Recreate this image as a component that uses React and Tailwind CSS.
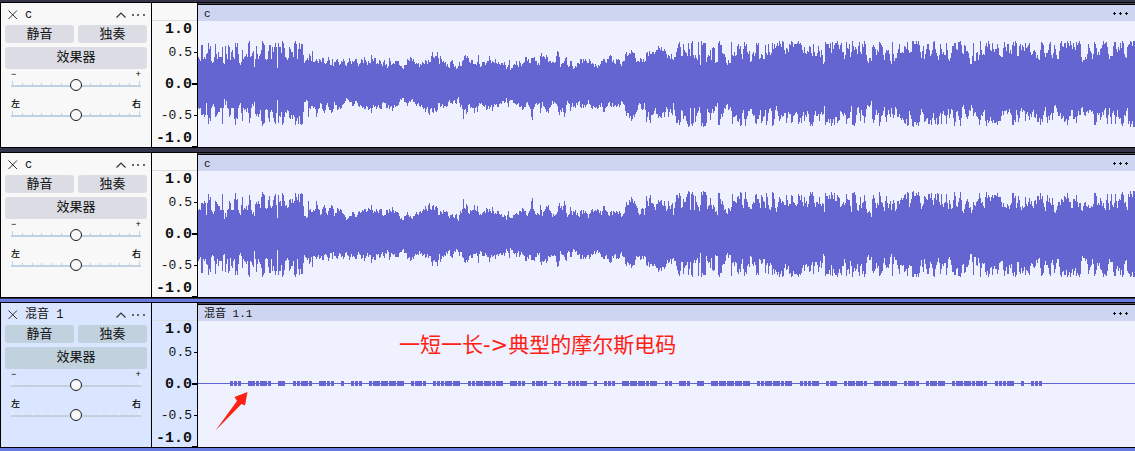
import React from "react";

const BODY_WIDTH = 937;
const CENTER = 63;

// Envelope key points, three sub-steps to a column: [position, level] pairs per section.
const UPPER = [
  { start: -3, points: [9,80,12,87,19,87,20,45,23,45,25,87,30,87,33,72,38,70,41,39,46,48,48,94,54,96,57,80,60,42,64,72,68,87,70,67,74,82,78,80,81,48,83,52,85,100,89,102,91,48,95,72,98,88,101,45,104,52,107,90,112,60,117,88,122,40,127,39,130,72,133,98,138,96,141,60,145,87,150,78,158,80,161,38,165,38,167,82,172,68,177,66,179,110,181,88,185,48,189,87,195,72,199,60,203,33,207,45,211,87,217,88,222,45,226,45,230,87,233,50,236,66,241,38,244,52,247,113,250,38,254,50,259,68,262,33,267,55,271,82,276,90,284,52,288,65,294,80,298,38,304,42,308,87,314,38,318,42,321,78,323,42,327,98,333,90,339,90,343,72,348,92,352,64,356,95,364,88,370,98,374,86,380,97,386,84,391,102,396,92,400,81,406,106,412,87,416,107,425,90,435,102,445,87,453,108,462,85,470,102,482,88,492,103,498,87,505,98,509,82,515,97,526,98,530,75,534,93,540,83,548,98,555,94,562,108,567,90,577,113,584,84,592,102,600,92,608,94,615,108,623,113,632,104,640,90,646,81,654,86,660,102,670,100,678,104,685,100,694,94,702,95,708,78,713,67,719,84,728,67,732,102,736,78,743,97,752,96,760,110,769,93,776,102,785,116,792,96,797,107,804,90,809,78,818,78,825,98,831,90,838,101,846,95,850,75,857,110,865,96,874,98,883,78,890,98,900,87,908,103,918,98,928,97,936,115,943,91,947,119,955,104,960,100] },
  { start: 307, points: [7,112,13,90,17,119,25,105,34,94,39,112,43,93,51,102,58,96,65,81,72,98,78,83,86,83,93,92,102,104,109,69,115,78,126,82,132,93,142,97,150,95,157,63,163,82,166,110,177,94,184,80,189,112,199,92,206,117,218,98,228,87,240,88,246,100,254,86,263,98,275,108,287,102,296,88,303,98,312,78,319,79,328,99,340,88,348,107,355,92,364,67,371,74,379,60,386,70,396,92,406,85,418,96,428,66,440,72,450,66,456,60,461,48,467,60,474,62,480,64,489,75,498,72,506,90,513,66,519,43,523,37,528,77,533,79,535,42,540,65,546,79,550,39,556,79,559,39,564,40,566,75,570,74,576,90,581,37,585,105,588,105,590,33,594,40,600,38,603,96,610,74,615,60,619,90,623,54,629,54,631,98,638,97,641,40,648,44,653,70,658,72,663,100,669,90,677,98,679,37,682,76,688,66,692,78,701,42,707,47,713,87,718,37,724,42,727,66,733,64,737,96,744,67,751,70,754,39,760,40,764,87,770,72,777,86,781,44,786,75,791,43,798,70,801,39,808,43,813,48,818,38,826,41,834,36,839,61,848,58,854,42,860,33,868,43,876,38,885,39,892,60,899,50,904,72,912,48,921,78,926,43,932,79,940,49,944,81,949,62,954,100,959,90] },
  { start: 617, points: [4,77,10,48,15,80,20,60,25,101,28,95,30,35,36,42,42,54,46,38,50,70,53,35,59,44,65,38,70,45,77,46,80,40,88,86,93,35,98,54,102,42,107,82,112,33,117,60,124,56,128,72,133,35,138,72,143,43,152,43,156,92,160,98,164,85,170,94,172,50,180,56,190,66,194,37,200,45,208,89,215,60,221,60,226,93,231,92,233,37,238,92,247,68,253,43,260,70,267,48,276,36,284,69,288,66,293,34,301,42,311,34,315,65,320,85,326,48,329,88,337,42,343,59,349,72,355,37,359,34,364,68,370,90,376,42,383,72,391,74,395,40,402,92,409,70,417,38,424,56,432,37,437,33,441,70,449,44,458,62,465,82,467,101,470,101,475,38,479,92,487,66,491,89,496,34,501,74,509,74,515,38,522,42,526,60,533,38,538,67,548,42,557,78,563,82,567,37,572,50,580,43,588,73,594,36,603,40,608,77,615,43,624,50,630,40,637,51,643,38,648,75,656,62,662,67,668,76,674,90,678,36,683,40,690,82,699,60,705,37,712,84,719,45,723,76,729,86,737,38,746,50,752,40,761,38,769,44,778,52,790,38,797,42,803,96,810,80,815,86,820,41,827,64,832,88,838,36,845,54,852,76,862,44,871,38,878,50,884,86,889,77,898,35,905,57,912,60,916,38,924,40,931,80,935,84,938,52,944,43,950,37,960,38] },
];

const LOWER = [
  { start: -3, points: [9,234,17,234,20,255,24,252,30,256,34,220,38,254,41,281,46,274,50,234,57,232,60,260,65,258,70,246,76,235,80,234,83,281,86,235,88,207,91,225,95,213,98,234,102,262,107,256,109,235,116,234,122,285,126,266,130,234,136,220,141,272,145,235,153,247,157,234,162,278,167,265,169,234,176,228,179,217,182,252,190,262,197,239,203,288,207,278,211,240,218,240,223,276,229,240,235,264,241,281,244,250,247,210,250,279,255,260,259,246,262,285,267,262,272,246,280,242,286,268,294,256,302,285,306,264,309,282,313,258,317,282,323,282,326,246,329,215,336,213,340,260,344,234,353,228,360,236,365,260,370,236,375,219,383,236,389,249,393,224,401,230,408,250,414,238,419,215,426,240,435,236,445,222,456,207,463,217,470,216,475,228,484,214,491,228,500,229,508,238,518,230,529,248,534,226,543,237,551,224,558,236,566,217,576,235,586,232,591,243,598,226,606,228,613,216,622,205,628,215,636,228,643,212,651,208,660,222,672,228,681,230,691,246,697,232,703,256,708,235,714,249,719,234,724,247,731,220,740,228,754,232,761,217,770,220,778,210,784,222,790,202,796,232,801,236,805,266,810,238,815,251,820,224,829,230,838,249,842,235,847,246,852,220,862,224,869,230,876,238,885,230,891,242,900,225,908,230,916,219,925,213,935,220,941,231,947,215,955,224,960,225] },
  { start: 307, points: [4,205,10,231,15,210,23,210,30,223,37,222,43,232,52,239,58,232,63,218,70,225,76,238,82,270,86,236,91,222,97,224,102,220,107,250,112,217,120,238,130,250,134,234,140,225,150,218,157,228,164,254,171,234,179,262,186,213,192,222,197,243,202,220,211,234,220,215,228,234,240,230,246,222,251,210,258,234,269,230,278,238,288,220,296,246,303,232,311,218,320,231,331,226,342,230,352,216,360,243,364,258,369,250,373,264,380,272,387,262,394,247,401,224,411,240,419,219,425,277,431,247,436,278,441,255,449,243,458,252,466,262,473,250,477,262,485,232,489,261,496,238,501,256,506,220,511,258,518,280,522,285,527,275,530,241,535,268,540,258,547,282,552,288,556,234,560,283,565,280,569,234,572,275,577,250,582,230,586,250,589,288,600,287,605,280,608,238,615,270,619,250,627,244,635,232,637,219,641,284,647,268,656,250,664,225,669,240,678,244,681,281,688,262,695,254,700,276,708,285,714,240,720,288,725,266,732,242,738,236,745,258,755,281,760,268,765,239,768,280,775,262,780,240,785,285,790,249,798,244,801,288,806,284,813,228,819,258,824,272,831,260,839,249,845,278,852,252,862,276,868,255,874,246,881,281,889,280,895,246,899,272,906,242,913,276,923,288,929,254,937,262,944,272,950,262,955,228,960,227] },
  { start: 617, points: [4,258,12,272,19,246,25,252,28,228,31,284,36,275,40,266,43,280,50,288,57,285,62,260,67,279,73,270,76,243,82,252,90,254,94,282,99,264,105,245,109,228,113,284,119,287,124,255,130,231,135,272,140,240,147,278,152,262,157,225,162,231,168,213,172,267,176,279,180,256,189,250,194,287,201,255,208,232,213,275,219,240,225,260,230,235,235,264,241,230,246,260,256,264,264,270,271,282,279,285,283,243,288,268,293,288,301,276,311,287,317,255,323,245,329,275,338,265,343,282,349,285,354,250,361,282,370,281,376,250,379,282,386,244,393,282,399,238,404,264,411,240,417,288,423,246,430,258,436,288,443,232,449,238,453,260,460,258,468,225,474,258,480,247,487,260,494,284,500,254,509,240,513,288,520,278,528,272,537,279,545,275,554,272,560,258,567,244,576,253,585,250,595,286,601,275,605,239,610,275,617,244,626,241,631,274,637,245,644,270,651,246,661,263,670,275,677,285,684,256,691,232,698,279,705,256,711,270,716,250,720,225,726,245,733,258,742,263,748,275,758,284,766,258,770,239,778,268,785,279,791,243,797,256,802,232,809,255,817,242,825,240,832,242,838,285,844,275,850,254,860,262,868,240,872,234,877,281,884,234,889,282,895,244,900,282,906,240,911,262,918,282,924,280,932,258,936,235,941,282,960,282] },
];

function envelope(sections, toLevel) {
  const columns = new Array(BODY_WIDTH).fill(20);
  for (const { start, points } of sections) {
    for (let i = 0; i + 3 < points.length; i += 2) {
      const from = Math.floor(points[i] / 3) + start;
      const to = Math.floor(points[i + 2] / 3) + start;
      const a = toLevel(points[i + 1]);
      const b = toLevel(points[i + 3]);
      for (let x = Math.max(from, 0); x <= Math.min(to, BODY_WIDTH - 1); x++) {
        const t = to === from ? 1 : (x - from) / (to - from);
        const level = a + (b - a) * t;
        const inner = x !== from && x !== to;
        const noise = inner ? (((x * 7919 + 31 * (x % 13)) % 17) / 16 - 0.6) * level * 0.24 : 0;
        columns[x] = Math.round(Math.min(43, level + noise));
      }
    }
  }
  return columns;
}

const rise = envelope(UPPER, (v) => 54 - v / 3);
const fall = envelope(LOWER, (v) => v / 3 - 54);

function wavePath(up, down) {
  return up
    .map((h, x) => `M${x} ${CENTER - h}h1V${CENTER + down[x]}h-1z`)
    .join("");
}

const MORSE = [
  [230, "..."], [248, "-.-."], [278, "-"], [293, "..-."], [319, "-.."], [341, "."],
  [351, "..."], [369, ".----"], [411, ".-."], [433, "...--"], [468, "..--.-"],
  [510, "-.."], [532, ".-."], [554, ".."], [568, "...-"], [594, "."], [604, "..."],
  [622, "---.-"], [665, ".."], [679, "-."], [697, "-"], [711, "-----"],
  [757, "..--.-"], [800, "...-"], [826, ".-"], [844, ".--."], [874, "---"],
  [904, ".-."], [926, ".--"], [952, ".--.-."], [995, "...-"], [1021, "."], [1031, "..."],
];

function morsePath() {
  let d = "";
  for (const [start, code] of MORSE) {
    let x = start - 198;
    for (const mark of code) {
      const w = mark === "." ? 3 : 7;
      d += `M${x} 60h${w}v5h-${w}z`;
      x += w + 1;
    }
  }
  return d;
}

function Wave({ d, children }) {
  return (
    <svg
      className="block h-[126px] w-full"
      viewBox={`0 0 ${BODY_WIDTH} 126`}
      preserveAspectRatio="none"
      shapeRendering="crispEdges"
      fill="#6565d1"
      aria-hidden="true"
    >
      <path d={d} />
      {children}
    </svg>
  );
}

function Slider({ label, low, high, selected }) {
  const line = selected ? "bg-[#c1d1de]" : "bg-[#c1d3e3]";
  const tick = selected ? "bg-[#eef4fa]" : "bg-[#c1d3e3]";
  return (
    <div className="mx-1.5">
      <div className="flex h-[9px] items-center justify-between pt-0.5 text-[9px] leading-[9px] font-medium text-black">
        <span>{low}</span>
        <span>{high}</span>
      </div>
      <div className="grid h-3 *:[grid-area:1/1]">
        <div className="flex h-2 flex-col justify-end">
          <div className="flex items-end justify-between px-px">
            {Array.from({ length: 14 }, (_, i) => (
              <span key={i} className={`w-px ${i === 0 || i === 13 ? "h-1" : "h-0.5"} ${tick}`} />
            ))}
          </div>
          <div className={`h-0.5 ${line}`} />
        </div>
        <input
          type="range"
          aria-label={label}
          defaultValue={50}
          className="m-0 h-3 w-full appearance-none bg-transparent [&::-webkit-slider-thumb]:size-3 [&::-webkit-slider-thumb]:appearance-none [&::-webkit-slider-thumb]:rounded-full [&::-webkit-slider-thumb]:border [&::-webkit-slider-thumb]:border-solid [&::-webkit-slider-thumb]:border-[#1c1c1c] [&::-webkit-slider-thumb]:bg-[#f8f8f8]"
        />
      </div>
    </div>
  );
}

function Panel({ name, selected }) {
  const button = `rounded-[3px] text-[13px] ${selected ? "bg-[#c1d1de]" : "bg-[#dcdde4]"}`;
  return (
    <div className={`w-[151px] shrink-0 border-r border-black px-1 ${selected ? "bg-[#dae6ff]" : "bg-[#f8f8f8]"}`}>
      <div className="flex h-[22px] items-center pt-0.5">
        <button aria-label="关闭" className="pr-1 pl-[3px]">
          <svg width="10" height="10" viewBox="0 0 10 10" stroke="#333" fill="none">
            <path d="M.5 .5 9 9M9 .5 .5 9" />
          </svg>
        </button>
        <h2 className="ml-[3px] flex-1 text-[12px] leading-4">{name}</h2>
        <button aria-label="折叠" className="mr-1.5">
          <svg width="10" height="6" viewBox="0 0 10 6" stroke="#333" strokeWidth="1.2" fill="none">
            <path d="M.5 5.5 5 1 9.5 5.5" />
          </svg>
        </button>
        <button aria-label="更多" className="mr-0.5">
          <svg width="13" height="2" viewBox="0 0 13 2" fill="#666">
            <path d="M0 0h2v2H0zM5 0h2v2H5zM11 0h2v2h-2z" />
          </svg>
        </button>
      </div>
      <div className="grid grid-cols-2 gap-1">
        <button className={`h-[18px] leading-5 ${button}`}>静音</button>
        <button className={`h-[18px] leading-5 ${button}`}>独奏</button>
        <button className={`col-span-2 h-[22px] leading-[22px] ${button}`}>效果器</button>
      </div>
      <div className="grid gap-[9px] pt-px">
        <Slider label="增益" low="−" high="+" selected={selected} />
        <Slider label="声像" low="左" high="右" selected={selected} />
      </div>
    </div>
  );
}

const SCALE = [
  ["1.0", "h-4 items-center", "text-[15px] font-bold", ""],
  ["0.5", "h-[30px] items-center", "text-[13px]", "h-px w-[3px]"],
  ["0.0", "h-[34px] items-center", "text-[15px] font-bold", "h-0.5 w-[5px]"],
  ["-0.5", "h-7 items-center", "text-[13px]", "h-px w-[3px]"],
  ["-1.0", "h-[18px] items-center", "text-[15px] font-bold", "h-px w-[5px] self-end"],
];

function Ruler({ selected }) {
  return (
    <div className={`w-[46px] shrink-0 border-r border-black ${selected ? "bg-[#dae6ff]" : "bg-[#f8f8f8]"}`}>
      <div className="h-[18px] border-b border-[#dcdde4]" />
      {SCALE.map(([text, row, type, tick]) => (
        <div key={text} className={`flex ${row}`}>
          <span className={`flex-1 pt-0.5 text-right leading-4 whitespace-nowrap ${type}`}>{text}</span>
          <span className="flex w-[5px] justify-end self-stretch">
            <span className={`bg-black ${tick} ${tick.includes("self-end") ? "" : "self-center"}`} />
          </span>
        </div>
      ))}
    </div>
  );
}

function Track({ name, clip, selected, children }) {
  return (
    <article className="flex border-y border-l border-black">
      <Panel name={name} selected={selected} />
      <Ruler selected={selected} />
      <section className="min-w-0 flex-1 border-t border-[#4a4b58] bg-[#eff1ff]">
        <header className="flex h-[17px] items-center justify-between border-t border-black bg-[#ced5f1] pr-[7px] pl-1.5">
          <h3 className="pt-px text-[11px] leading-4">{clip}</h3>
          <button aria-label="片段菜单">
            <svg className="block" width="15" height="3" viewBox="0 0 15 3" fill="#111" shapeRendering="crispEdges">
              <path d="M1 0h1v1h1v1h-1v1h-1v-1h-1v-1h1zM7 0h1v1h1v1h-1v1h-1v-1h-1v-1h1zM13 0h1v1h1v1h-1v1h-1v-1h-1v-1h1z" />
            </svg>
          </button>
        </header>
        <div className="relative">{children}</div>
      </section>
    </article>
  );
}

export default function App() {
  return (
    <main className="bg-[#33344a] pt-0.5 font-['Liberation_Mono','Noto_Sans_CJK_SC',monospace] text-[#111]">
      <Track name="c" clip="c">
        <Wave d={wavePath(rise, fall)} />
      </Track>
      <div className="h-1" />
      <Track name="c" clip="c">
        <Wave d={wavePath(fall, rise)} />
      </Track>
      <div className="mt-px border-y-[3px] border-[#667ae0]">
        <Track name="混音 1" clip="混音 1.1" selected>
          <Wave d={morsePath()}>
            <path d="M0 62h937v1H0z" />
          </Wave>
          <svg className="absolute top-[71px] left-[17px]" width="33" height="39" viewBox="0 0 33 39" fill="#fe2012" aria-hidden="true">
            <path d="M.5 38.5 22 9 19.5 5 32.5 0 30 13.5 26.5 12z" />
          </svg>
          <p className="absolute top-2 left-[201px] font-['DejaVu_Sans','Noto_Sans_CJK_SC',sans-serif] text-[21px] leading-8 whitespace-nowrap text-[#fe2012]">
            一短一长-&gt;典型的摩尔斯电码
          </p>
        </Track>
      </div>
    </main>
  );
}
